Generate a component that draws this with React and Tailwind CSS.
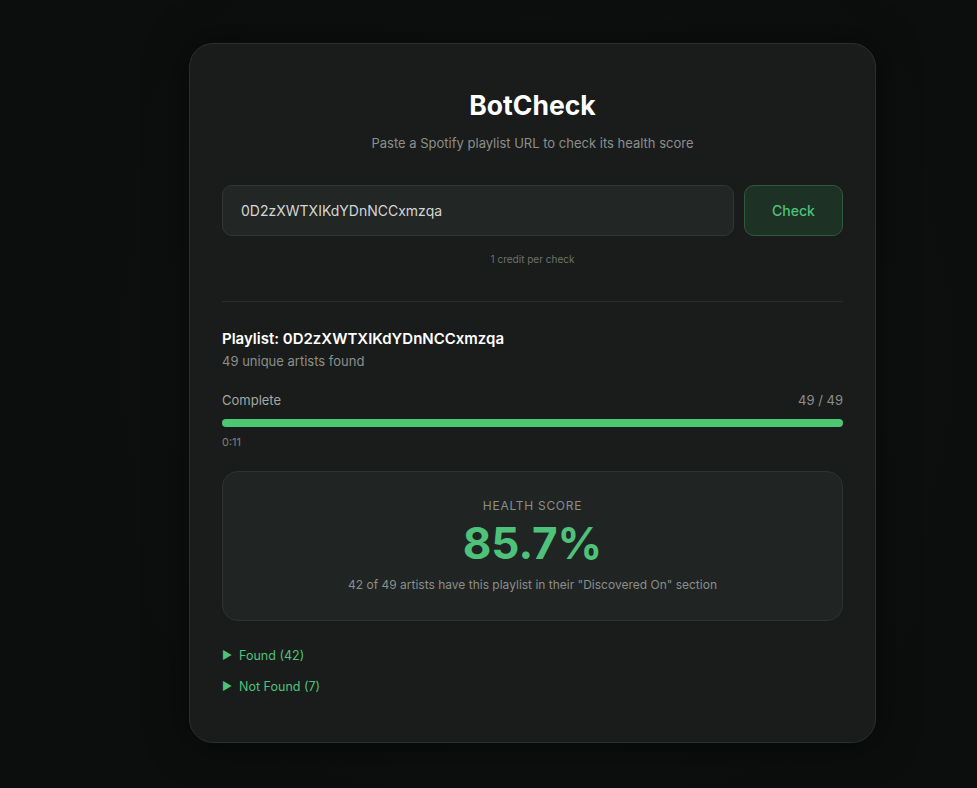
import { useState } from "react";

// Playlist check result, hardcoded for now
const RESULT = {
  id: "0D2zXWTXIKdYDnNCCxmzqa",
  total: 49,
  found: 42,
  elapsed: "0:11",
};

const Disclosure = ({ label }) => (
  <div className="flex items-center gap-[7px] text-[12.5px] leading-[19px] text-[#4ec27a] cursor-pointer">
    <span className="text-[11px] leading-none">▶</span>
    <span>{label}</span>
  </div>
);

export default function App() {
  const [url, setUrl] = useState(RESULT.id);
  const score = ((RESULT.found / RESULT.total) * 100).toFixed(1);

  return (
    <div
      className="min-h-screen bg-[#0c0e0d] bg-[radial-gradient(circle_at_55%_45%,#101311_0%,#0c0e0d_70%)] pt-[43px] pb-[44px] pl-[189px]"
      style={{ fontFamily: "Inter, 'Noto Sans', sans-serif" }}
    >
      <div className="w-[687px] rounded-[24px] border border-[#26322c] bg-[#1a1c1b] px-8 pt-[45px] pb-[46px] shadow-[0_0_40px_rgba(0,0,0,0.5)]">
        {/* Header */}
        <div className="text-center">
          <h1 className="text-[26.5px] font-bold text-white leading-[32px]">BotCheck</h1>
          <p className="mt-[13px] text-[13px] text-[#8a8f8c]">
            Paste a Spotify playlist URL to check its health score
          </p>
        </div>

        {/* URL input */}
        <div className="mt-[31px] flex gap-[10px]">
          <input
            value={url}
            onChange={(e) => setUrl(e.target.value)}
            className="h-[51px] flex-1 rounded-[10px] border border-[#323735] bg-[#222625] px-[18px] text-[14px] text-[#d4d6d5] outline-none"
          />
          <button className="h-[51px] w-[99px] rounded-[10px] border border-[#2e5a3d] bg-[#1d3125] text-[14px] font-medium text-[#4ec27a]">
            Check
          </button>
        </div>
        <p className="mt-[16px] text-center text-[10px] text-[#6d726f]">1 credit per check</p>

        <div className="mt-[34px] border-t border-[#2a2d2c]" />

        {/* Result */}
        <div className="mt-[26px]">
          <h2 className="text-[15px] font-semibold text-white">Playlist: {RESULT.id}</h2>
          <p className="mt-[2px] text-[13px] text-[#8a8f8c]">{RESULT.total} unique artists found</p>
        </div>

        <div className="mt-[19px]">
          <div className="flex justify-between text-[13px] text-[#a3a7a5]">
            <span>Complete</span>
            <span className="text-[#8a8f8c]">
              {RESULT.total} / {RESULT.total}
            </span>
          </div>
          <div className="mt-[9px] h-[8px] rounded-full bg-[#2a2e2c]">
            <div className="h-full rounded-full bg-[#4cc873]" style={{ width: "100%" }} />
          </div>
          <p className="mt-[7px] text-[11px] text-[#7b807d]">{RESULT.elapsed}</p>
        </div>

        {/* Health score */}
        <div className="mt-[20px] rounded-[16px] border border-[#2e3331] bg-[#202423] pt-[25px] pb-[26px] text-center">
          <p className="text-[12px] uppercase tracking-[0.06em] text-[#8a8f8c]">Health Score</p>
          <p className="mt-[2px] text-[44px] font-bold leading-[52px] text-[#4ec27a]">{score}%</p>
          <p className="mt-[7px] text-[12px] text-[#8a8f8c]">
            {RESULT.found} of {RESULT.total} artists have this playlist in their "Discovered On" section
          </p>
        </div>

        {/* Artist lists */}
        <div className="mt-[25px] flex flex-col gap-[12px]">
          <Disclosure label={`Found (${RESULT.found})`} />
          <Disclosure label={`Not Found (${RESULT.total - RESULT.found})`} />
        </div>
      </div>
    </div>
  );
}
